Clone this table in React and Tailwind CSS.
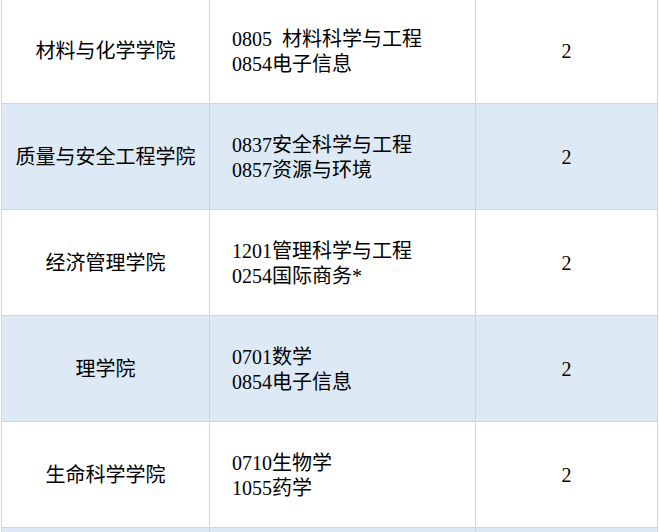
import React from "react";

const rows = [
  { name: "材料与化学学院", lines: [<>0805<span className="inline-block w-[10px]" />材料科学与工程</>, "0854电子信息"], n: "2", blue: false },
  { name: "质量与安全工程学院", lines: ["0837安全科学与工程", "0857资源与环境"], n: "2", blue: true },
  { name: "经济管理学院", lines: ["1201管理科学与工程", "0254国际商务*"], n: "2", blue: false },
  { name: "理学院", lines: ["0701数学", "0854电子信息"], n: "2", blue: true },
  { name: "生命科学学院", lines: ["0710生物学", "1055药学"], n: "2", blue: false },
  { name: "", lines: [], n: "", blue: true },
];

export default function App() {
  return (
    <div className="w-[659px] h-[532px] overflow-hidden bg-white">
      <div
        className="ml-[1px] mt-[-2px] w-[657px] border-l border-r border-[#c4d7eb] text-black text-[20px] leading-[25px]"
        style={{ fontFamily: '"Liberation Serif", "Noto Sans CJK SC", serif' }}
      >
        {rows.map((r, i) => (
          <div
            key={i}
            className={`flex h-[106px] border-b border-[#c4d7eb] ${r.blue ? "bg-[#ddeaf6]" : "bg-white"}`}
          >
            <div className="w-[208px] shrink-0 border-r border-[#c4d7eb] flex items-center justify-center pt-[2px]">
              {r.name}
            </div>
            <div className="w-[266px] shrink-0 border-r border-[#c4d7eb] flex flex-col justify-center pl-[22px] pt-[2px]">
              {r.lines.map((l, j) => (
                <div key={j} className="whitespace-nowrap">{l}</div>
              ))}
            </div>
            <div className="w-[181px] shrink-0 flex items-center justify-center pt-[2px]">
              {r.n}
            </div>
          </div>
        ))}
      </div>
    </div>
  );
}
